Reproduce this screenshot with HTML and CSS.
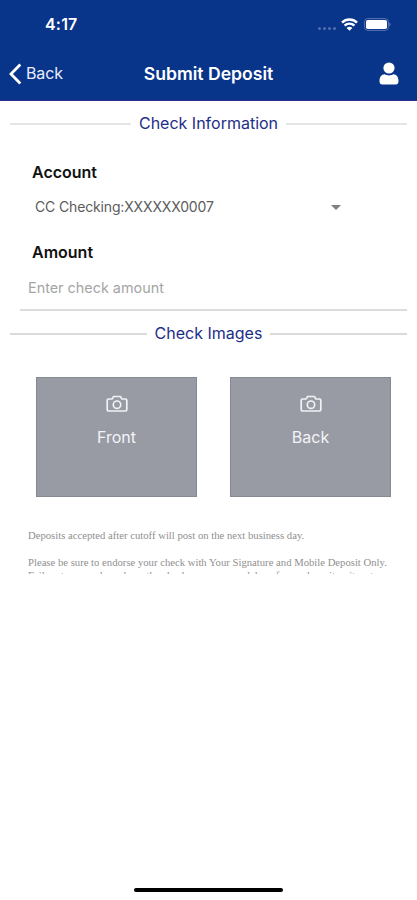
FILE: index.html
```html
<!DOCTYPE html>
<html lang="en">
<head>
<meta charset="utf-8">
<title>Submit Deposit</title>
<link rel="stylesheet" href="styles.css">
</head>
<body>
<div class="screen">
  <header class="header">
    <div class="status">
      <span class="time">4:17</span>
      <div class="indicators">
        <span class="signal"><i></i><i></i><i></i><i></i></span>
        <svg class="wifi" viewBox="0 0 17 13" width="17" height="13"><g fill="none" stroke="#fff" stroke-width="2.4"><path d="M1 4.600a10.600 10.600 0 0 1 15 0"/><path d="M3.600 7.700a6.900 6.900 0 0 1 9.800 0"/></g><path d="M8.500 12.800 5.600 9.900a4 4 0 0 1 5.800 0z" fill="#fff"/></svg>
        <svg class="battery" viewBox="0 0 27 13" width="27" height="13"><rect x=".6" y=".6" width="23.8" height="11.8" rx="3.2" fill="none" stroke="#5a74b4"/><rect x="2" y="2" width="21" height="9" rx="1.8" fill="#fff"/><path d="M25.500 4.500v4c1.300-.7 1.300-3.300 0-4z" fill="#8495c8"/></svg>
      </div>
    </div>
    <nav class="nav">
      <a class="back"><svg viewBox="0 0 13 22" width="13" height="22"><path d="M11.300 1.500 2 11l9.300 9.500" fill="none" stroke="#fff" stroke-width="2.800"/></svg><span>Back</span></a>
      <h1 class="title">Submit Deposit</h1>
      <svg class="user" viewBox="0 0 20 23" width="20" height="23" fill="#fff"><circle cx="10" cy="6" r="5.600"/><path d="M.5 19.200c0-4 1.800-7 5.200-7 1.300.7 2.700 1.200 4.300 1.200s3-.5 4.300-1.200c3.400 0 5.200 3 5.200 7 0 2-1 3.300-2.700 3.300H3.200C1.500 22.500.5 21.200.5 19.200z"/></svg>
    </nav>
  </header>
  <main>
    <h2 class="section info"><span>Check Information</span></h2>
    <div class="label account">Account</div>
    <div class="select"><span>CC Checking:XXXXXX0007</span><i class="caret"></i></div>
    <div class="label amount">Amount</div>
    <div class="input"><span>Enter check amount</span></div>
    <h2 class="section images"><span>Check Images</span></h2>
    <div class="cards">
      <div class="card"><svg class="camera" viewBox="0 0 22 18" width="22" height="18"><path d="M2.500 4h3.600l1.500-2.500h6.800L15.900 4h3.600c.8 0 1.300.5 1.300 1.300v9.400c0 .8-.5 1.300-1.300 1.300h-17c-.8 0-1.300-.5-1.300-1.300V5.300C1.200 4.500 1.700 4 2.500 4z"/><circle cx="11" cy="9.700" r="3.700"/></svg><span>Front</span></div>
      <div class="card"><svg class="camera" viewBox="0 0 22 18" width="22" height="18"><path d="M2.500 4h3.600l1.500-2.500h6.800L15.900 4h3.600c.8 0 1.300.5 1.300 1.300v9.400c0 .8-.5 1.300-1.300 1.300h-17c-.8 0-1.300-.5-1.300-1.300V5.300C1.200 4.500 1.700 4 2.500 4z"/><circle cx="11" cy="9.700" r="3.700"/></svg><span>Back</span></div>
    </div>
    <div class="notice">
      <p class="first">Deposits accepted after cutoff will post on the next business day.</p>
      <p class="second">Please be sure to endorse your check with Your Signature and Mobile Deposit Only.</p>
      <p class="third">Failure to properly endorse the check may cause a delay of your deposit or its return</p>
    </div>
  </main>
  <div class="home"></div>
</div>
</body>
</html>
```
FILE: styles.css
```css
* { box-sizing: border-box; }
body { margin: 0; background: #fff; font-family: Inter, "Liberation Sans", sans-serif; }
.screen { width: 417px; height: 900px; display: flex; flex-direction: column; overflow: hidden; }
.header { height: 101px; background: #083489; border-bottom: 1px solid #302d8c; color: #fff; flex: none; }
.status { height: 48px; padding: 0 26px 0 45px; display: flex; justify-content: space-between; align-items: center; }
.time { font-size: 16px; font-weight: 600; line-height: 20px; letter-spacing: .2px; }
.indicators { display: flex; align-items: center; }
.signal { display: flex; gap: 2px; margin: 8px 5px 0 0; }
.signal i { width: 3px; height: 3px; border-radius: 50%; background: #526fae; }
.wifi { margin-right: 6px; }
.nav { height: 51px; padding: 0 9px; display: grid; grid-template-columns: 1fr auto 1fr; align-items: center; }
.back { display: flex; align-items: center; gap: 4px; font-size: 16px; letter-spacing: -.1px; color: #e9edff; }
.back span { padding-bottom: 2px; }
.title { margin: 0; font-size: 17.6px; font-weight: 600; line-height: 22px; }
.user { justify-self: end; margin-right: 9px; }
main { flex: 1; }
.section { margin: 0 10px; height: 22px; display: flex; align-items: center; gap: 8px; color: #1d2e87; font-size: 16px; font-weight: 400; line-height: 22px; }
.section::before, .section::after { content: ""; flex: 1; height: 2px; background: #e3e5e7; }
.section span { padding-bottom: 2px; }
.info { margin-top: 12px; }
.label { margin-left: 32px; font-size: 16px; font-weight: 600; line-height: 20px; color: #111; }
.account { margin-top: 27px; }
.select { margin: 14px 76px 0 35px; height: 20px; display: flex; align-items: center; justify-content: space-between; color: #5c5c5c; font-size: 14px; letter-spacing: -.15px; }
.caret { border: 5px solid transparent; border-top-color: #7f7f7f; border-bottom: 0; margin-top: 3px; }
.amount { margin-top: 26px; }
.input { margin: 6px 10px 0 20px; height: 43px; padding: 10px 7px 0 8px; border-bottom: 2px solid #dcdcdc; color: #a5a5a5; font-size: 14.4px; line-height: 20px; }
.images { margin-top: 12px; }
.images::before, .images::after { background: #dadada; }
.cards { margin: 32px 26px 0 36px; display: flex; justify-content: space-between; }
.card { width: 161px; height: 120px; padding-top: 17px; background: #989ba4; border: 1px solid #858991; display: flex; flex-direction: column; align-items: center; color: #f3f4f7; font-size: 16px; line-height: 20px; }
.camera { fill: none; stroke: #f1f2f5; stroke-width: 1.7; margin-bottom: 14px; }
.notice { margin: 31px 20px 0 28px; height: 46px; overflow: hidden; color: #8f8f8f; font-family: "Liberation Serif", serif; font-size: 10.68px; line-height: 14px; white-space: nowrap; }
.notice p { margin: 0; }
.notice .second { margin-top: 13px; }
.notice .third { line-height: 12px; }
.home { width: 149px; height: 4px; margin: 0 auto 8px; background: #000; border-radius: 2px; flex: none; }
```
